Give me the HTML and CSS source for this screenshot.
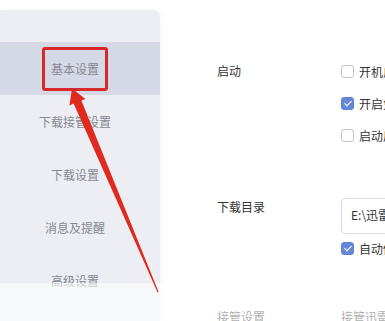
FILE: index.html
```html
<!DOCTYPE html>
<html lang="zh-CN">
<head>
  <meta charset="UTF-8" />
  <title>设置</title>
  <link rel="stylesheet" href="styles.css">
</head>
<body>
  <div class="page">
    <!-- SIDEBAR -->
    <nav class="sidebar">
      <div class="nav-item active"><span class="mark">基本设置</span></div>
      <div class="nav-item">下载接管设置</div>
      <div class="nav-item">下载设置</div>
      <div class="nav-item">消息及提醒</div>
      <div class="nav-item">高级设置</div>
    </nav>

    <!-- CONTENT -->
    <main class="content">
      <section class="row row-start">
        <div class="label">启动</div>
        <div class="controls">
          <div class="check"><span class="box"></span>开机启动迅雷</div>
          <div class="check"><span class="box on"></span>开启免打扰模式</div>
          <div class="check"><span class="box"></span>启动后自动开始下载</div>
        </div>
      </section>

      <section class="row row-dir">
        <div class="label">下载目录</div>
        <div class="controls">
          <div class="path">E:\迅雷下载</div>
          <div class="check tight"><span class="box on"></span>自动修改为上次使用的目录</div>
        </div>
      </section>

      <section class="row row-take">
        <div class="label">接管设置</div>
        <div class="controls">
          <div class="plain">接管迅雷浏览器下载</div>
        </div>
      </section>
    </main>

    <div class="fade"></div>

    <!-- ARROW -->
    <svg class="arrow" width="385" height="321" viewBox="0 0 385 321">
      <polygon points="72,88.5 85.5,99 81.4,100.5 158.6,292 157.6,292.4 73.6,103.6 69.4,105.6" fill="#e02a20"/>
    </svg>
  </div>
</body>
</html>
```

FILE: styles.css
```css
* {
  box-sizing: border-box;
  margin: 0;
  padding: 0;
}
body {
  width: 385px;
  height: 321px;
  overflow: hidden;
  background: #fff;
  font-family: "Noto Sans CJK SC", "Noto Sans", sans-serif;
  font-size: 12px;
  color: #333;
}
.page {
  position: relative;
  display: flex;
  width: 385px;
  height: 321px;
}

/* SIDEBAR */
.sidebar {
  flex: 0 0 160px;
  margin-top: 10px;
  padding: 32px 10px 0 0;
  background: #eceef3;
  border-top-right-radius: 7px;
  box-shadow: 2px 0 6px rgba(0, 0, 0, 0.03);
}
.nav-item {
  height: 53px;
  display: flex;
  align-items: center;
  justify-content: center;
  color: #858891;
  white-space: nowrap;
}
.nav-item.active {
  background: #d5d9e5;
  margin-right: -10px;
  padding-right: 10px;
}
.mark {
  display: inline-block;
  padding: 10px 6px;
  line-height: 18px;
  border: 3px solid #d8282b;
  border-radius: 3px;
}

/* CONTENT */
.content {
  flex: 1;
  padding: 55px 0 0 57px;
  white-space: nowrap;
}
.row {
  display: grid;
  grid-template-columns: 124px 200px;
}
.label {
  line-height: 18px;
  color: #333;
}
.row-start .label {
  padding-top: 7px;
}
.check {
  height: 32px;
  display: flex;
  align-items: center;
  gap: 5px;
  color: #333;
}
.check.tight {
  height: 28px;
}
.box {
  width: 13px;
  height: 13px;
  flex: 0 0 13px;
  border: 1px solid #c2c5cc;
  border-radius: 3px;
  background: #fff;
}
.box.on {
  background: #6587d8;
  border-color: #5f80d2;
  position: relative;
}
.box.on::after {
  content: "";
  position: absolute;
  left: 3.5px;
  top: 1.5px;
  width: 3px;
  height: 6px;
  border: solid #fff;
  border-width: 0 1.5px 1.5px 0;
  transform: rotate(45deg);
}
.row-dir {
  margin-top: 47px;
}
.path {
  height: 36px;
  width: 200px;
  border: 1px solid #d9dbe0;
  border-radius: 4px;
  padding: 0 9px;
  line-height: 32px;
  color: #333;
}
.row-take {
  margin-top: 46px;
}
.plain {
  line-height: 18px;
}

.fade {
  position: absolute;
  left: 0;
  top: 283px;
  width: 385px;
  height: 38px;
  background: rgba(255, 255, 255, 0.6);
}
.arrow {
  position: absolute;
  left: 0;
  top: 0;
}
```
